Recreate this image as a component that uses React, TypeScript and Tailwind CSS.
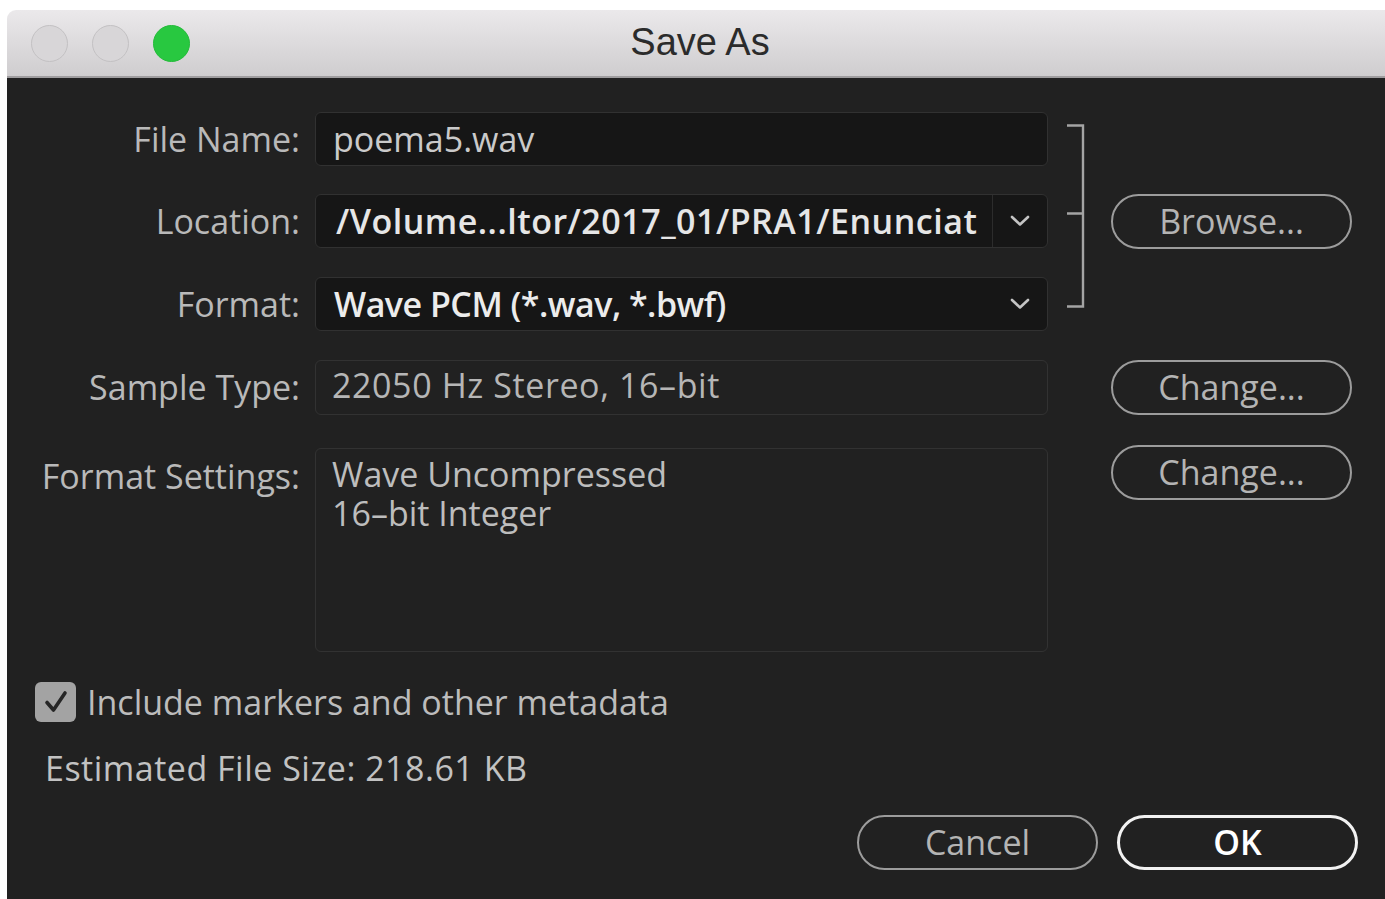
import React from "react";

const FONT = { fontFamily: '"Open Sans", "Noto Sans", sans-serif' };

function Chevron() {
  return (
    <svg width="20" height="12" viewBox="0 0 20 12" fill="none">
      <path d="M2 2 L10 9.5 L18 2" stroke="#c4c4c4" strokeWidth="2.6" strokeLinecap="round" strokeLinejoin="round" />
    </svg>
  );
}

function Light({ color, border }: { color: string; border: string }) {
  return (
    <div
      className="w-[37px] h-[37px] rounded-full border-[1.5px]"
      style={{ backgroundColor: color, borderColor: border }}
    />
  );
}

function Label({ children }: { children: React.ReactNode }) {
  return (
    <div className="w-[308px] shrink-0 pr-[15px] text-right text-[34px] leading-[39px] font-medium text-[#b9b9b9]">
      {children}
    </div>
  );
}

function PillButton({ children, primary }: { children: React.ReactNode; primary?: boolean }) {
  return (
    <button
      className={
        primary
          ? "w-[241px] h-[55px] rounded-full border-[3px] border-[#f2f2f2] text-[34px] leading-none font-semibold text-white flex items-center justify-center"
          : "w-[241px] h-[55px] rounded-full border-[2.5px] border-[#9c9c9c] text-[34px] leading-none font-medium text-[#b4b4b4] flex items-center justify-center"
      }
    >
      <span className="-mt-[2px]">{children}</span>
    </button>
  );
}

export default function App() {
  return (
    <div className="w-[1385px] h-[899px] bg-white pt-[10px] pl-[7px] flex flex-col overflow-hidden" style={FONT}>
      <div className="flex-1 flex flex-col rounded-tl-[9px] overflow-hidden">
        {/* title bar */}
        <div className="relative h-[68px] shrink-0 bg-gradient-to-b from-[#ebe9eb] to-[#cfcdcf] border-b-[2px] border-[#9f9d9f] flex items-center pl-[24px] gap-[24px]">
          <Light color="#d8d6d8" border="#c3c1c3" />
          <Light color="#d8d6d8" border="#c3c1c3" />
          <Light color="#28c840" border="#24bb3a" />
          <div
            className="absolute left-0 right-0 top-0 bottom-0 flex items-center justify-center pl-[8px] pb-[2px] text-[38px] text-[#2b2b2b] pointer-events-none"
            style={{ fontFamily: '"Liberation Sans", Arial, sans-serif' }}
          >
            Save As
          </div>
        </div>

        {/* body */}
        <div className="flex-1 bg-[#212121] flex flex-col pt-[34px]">
          {/* name / location / format, bracketed to Browse */}
          <div className="flex">
            <div className="flex flex-col w-[1041px]">
              <div className="flex items-center h-[54px]">
                <Label>File Name:</Label>
                <div className="w-[733px] h-[54px] rounded-[6px] bg-[#161616] border-[1.5px] border-[#313131] flex items-center pl-[17px] text-[34px] text-[#cacaca]">
                  poema5.wav
                </div>
              </div>
              <div className="flex items-center h-[54px] mt-[28px]">
                <Label>Location:</Label>
                <div className="w-[733px] h-[54px] rounded-[6px] bg-[#161616] border-[1.5px] border-[#313131] flex items-center overflow-hidden">
                  <div className="flex-1 pl-[20px] text-[34px] font-semibold tracking-[0.5px] text-[#e6e6e6] whitespace-nowrap overflow-hidden">
                    /Volume...ltor/2017_01/PRA1/Enunciat
                  </div>
                  <div className="w-[55px] h-full border-l-[1.5px] border-[#2c2c2c] flex items-center justify-center shrink-0">
                    <Chevron />
                  </div>
                </div>
              </div>
              <div className="flex items-center h-[54px] mt-[29px]">
                <Label>Format:</Label>
                <div className="w-[733px] h-[54px] rounded-[6px] bg-[#161616] border-[1.5px] border-[#313131] flex items-center">
                  <div className="flex-1 pl-[18px] text-[34px] font-semibold tracking-[-0.5px] text-[#ececec] whitespace-nowrap">
                    Wave PCM (*.wav, *.bwf)
                  </div>
                  <div className="w-[55px] flex items-center justify-center shrink-0">
                    <Chevron />
                  </div>
                </div>
              </div>
            </div>
            <div className="w-[63px] shrink-0 pl-[19px] pt-[12px]">
              <svg width="18" height="184" viewBox="0 0 18 184" fill="none">
                <path d="M0 1.5 H16 V182.5 H0 M0 89.5 H16" stroke="#a4a4a4" strokeWidth="2.4" />
              </svg>
            </div>
            <div className="w-[241px] shrink-0 flex items-center">
              <PillButton>Browse...</PillButton>
            </div>
          </div>

          {/* sample type */}
          <div className="flex items-center mt-[29px]">
            <Label>Sample Type:</Label>
            <div className="w-[733px] h-[55px] rounded-[6px] border-[1.5px] border-[#323232] flex items-center pl-[16px] text-[34px] font-medium tracking-[0.6px] text-[#b6b6b6]">
              <span className="-mt-[5px]">22050 Hz Stereo, 16–bit</span>
            </div>
            <div className="w-[63px] shrink-0" />
            <PillButton>Change...</PillButton>
          </div>

          {/* format settings */}
          <div className="flex items-start mt-[33px]">
            <div className="pt-[9px]">
              <Label>Format Settings:</Label>
            </div>
            <div className="w-[733px] h-[204px] rounded-[6px] border-[1.5px] border-[#323232] pl-[16px] pt-[6px] text-[34px] leading-[39px] font-medium text-[#bdbdbd]">
              <div>Wave Uncompressed</div>
              <div>16–bit Integer</div>
            </div>
            <div className="w-[63px] shrink-0" />
            <div className="-mt-[3px]">
              <PillButton>Change...</PillButton>
            </div>
          </div>

          {/* metadata checkbox */}
          <div className="flex items-center mt-[30px] pl-[28px] gap-[11px]">
            <div className="w-[41px] h-[40px] rounded-[6px] bg-[#a3a3a3] flex items-center justify-center">
              <svg width="28" height="26" viewBox="0 0 28 26" fill="none">
                <path d="M5 13.5 L11.5 21 L23 4" stroke="#262626" strokeWidth="3.6" strokeLinecap="round" strokeLinejoin="round" />
              </svg>
            </div>
            <div className="text-[34px] leading-[39px] font-medium text-[#bcbcbc]">Include markers and other metadata</div>
          </div>

          <div className="mt-[27px] pl-[38px] text-[34px] leading-[39px] font-medium tracking-[0.5px] text-[#c2c2c2]">
            Estimated File Size: 218.61 KB
          </div>

          {/* dialog actions */}
          <div className="flex justify-end gap-[20px] pr-[27px] mt-[27px]">
            <div className="w-[240px]">
              <PillButton>Cancel</PillButton>
            </div>
            <PillButton primary>OK</PillButton>
          </div>
        </div>
      </div>
    </div>
  );
}
